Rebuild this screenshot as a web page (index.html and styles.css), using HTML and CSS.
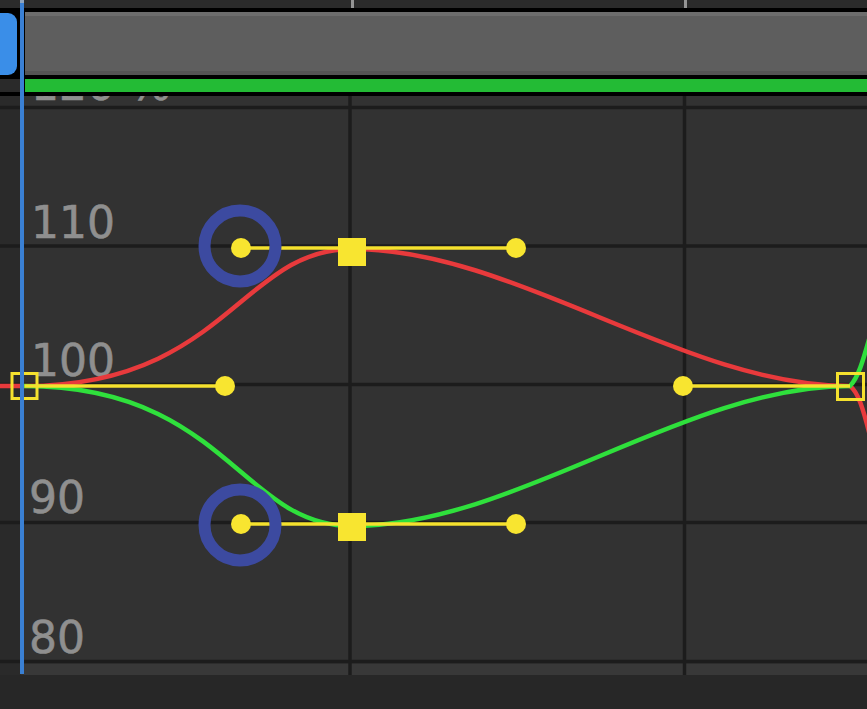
FILE: index.html
```html
<!DOCTYPE html>
<html>
<head>
<meta charset="utf-8">
<link rel="stylesheet" href="styles.css">
</head>
<body>
<div class="screen">
  <div class="ruler">
    <span class="ruler-gap g1"></span><span class="tick"></span>
    <span class="ruler-gap g2"></span><span class="tick"></span>
  </div>
  <div class="header">
    <div class="track">
      <div class="pill"></div>
      <div class="bar"></div>
    </div>
    <div class="keys">
      <div class="keys-left"></div>
      <div class="keys-bar"></div>
    </div>
  </div>
  <div class="graph">
    <svg class="graph-svg" width="867" height="579" viewBox="0 0 867 579">
      <rect x="0" y="0" width="867" height="579" class="bg"/>
      <rect x="0" y="0" width="21" height="579" class="bg-left"/>
      <rect x="24" y="568" width="843" height="11" class="bg-bottom"/>
      <g class="grid">
        <line x1="0" y1="11.5" x2="867" y2="11.5"/>
        <line x1="0" y1="150" x2="867" y2="150"/>
        <line x1="0" y1="288.5" x2="867" y2="288.5"/>
        <line x1="0" y1="426.5" x2="867" y2="426.5"/>
        <line x1="0" y1="565.5" x2="867" y2="565.5"/>
        <line x1="350" y1="0" x2="350" y2="579"/>
        <line x1="684.5" y1="0" x2="684.5" y2="579"/>
      </g>
      <g class="labels">
        <text x="31" y="4">120 %</text>
        <text x="31" y="142">110</text>
        <text x="31" y="280">100</text>
        <text x="29" y="417">90</text>
        <text x="29" y="557">80</text>
      </g>
      <path class="curve red" d="M0,290 L24.5,290 C225,290 241,153 352,153 C516,153 683,290 850,290 C858,296 863,312 870,340"/>
      <path class="curve green" d="M24.5,290 C225,290 241,430 352,430 C516,430 683,290 850,290 C858,282 863,265 870,240"/>
      <g class="handles">
        <line x1="24.5" y1="290" x2="225" y2="290"/>
        <line x1="241" y1="152" x2="516" y2="152"/>
        <line x1="241" y1="428" x2="516" y2="428"/>
        <line x1="683" y1="290" x2="850" y2="290"/>
      </g>
      <g class="dots">
        <circle cx="225" cy="290" r="10"/>
        <circle cx="241" cy="152" r="10"/>
        <circle cx="516" cy="152" r="10"/>
        <circle cx="241" cy="428" r="10"/>
        <circle cx="516" cy="428" r="10"/>
        <circle cx="683" cy="290" r="10"/>
        <rect x="338" y="142" width="28" height="28"/>
        <rect x="338" y="417" width="28" height="28"/>
      </g>
      <g class="hollow">
        <rect x="12" y="277.5" width="25" height="25"/>
        <rect x="837.5" y="277.5" width="26" height="26"/>
      </g>
      <g class="rings">
        <circle cx="240" cy="150" r="35.5"/>
        <circle cx="240" cy="429" r="35.5"/>
      </g>
    </svg>
  </div>
  <div class="footer"></div>
  <div class="playhead"><span class="playhead-cap"></span></div>
</div>
</body>
</html>
```
FILE: styles.css
```css
html, body {
  margin: 0;
  padding: 0;
  background: #272727;
}
.screen {
  position: relative;
  width: 867px;
  height: 709px;
  overflow: hidden;
  font-family: "DejaVu Sans", sans-serif;
}
.ruler {
  display: flex;
  height: 8px;
  background: #2b2b2b;
}
.ruler-gap.g1 { width: 351px; }
.ruler-gap.g2 { width: 330px; }
.tick {
  width: 3px;
  background: #959595;
}
.header {
  display: flex;
  flex-direction: column;
  gap: 4px;
  padding: 4px 0;
  background: #000;
}
.track {
  display: flex;
  height: 63px;
}
.pill {
  width: 17px;
  margin-top: 1px;
  background: #3a8ee8;
  border-radius: 0 9px 9px 0;
}
.bar {
  flex: 1;
  margin-left: 8px;
  background: #5e5e5e;
  border-top: 4px solid #6d6d6d;
  border-bottom: 4px solid #545454;
}
.keys {
  display: flex;
  height: 13px;
}
.keys-left {
  width: 20px;
  background: #2a2a2a;
}
.keys-bar {
  flex: 1;
  margin-left: 5px;
  background: #23bb35;
}
.graph {
  height: 579px;
  overflow: hidden;
}
.graph-svg {
  display: block;
  overflow: hidden;
}
.bg { fill: #323232; }
.bg-left { fill: #2a2a2a; }
.bg-bottom { fill: #383838; }
.grid line {
  stroke: #1c1c1c;
  stroke-width: 3.5;
}
.labels text {
  font-family: "DejaVu Sans", sans-serif;
  font-size: 44px;
  fill: #8f8f8f;
  stroke: #8f8f8f;
  stroke-width: 0.6;
}
.curve {
  fill: none;
  stroke-width: 4.5;
  stroke-linecap: round;
}
.curve.red { stroke: #e83a3c; }
.curve.green { stroke: #2fe03c; }
.handles line {
  stroke: #f5e12e;
  stroke-width: 3.5;
}
.dots circle,
.dots rect {
  fill: #f8e530;
}
.hollow rect {
  fill: none;
  stroke: #f5e12e;
  stroke-width: 3;
}
.rings circle {
  fill: none;
  stroke: #3c4aa0;
  stroke-width: 12;
}
.footer {
  height: 34px;
  background: #272727;
}
.playhead {
  position: absolute;
  left: 20px;
  top: 0;
  width: 4px;
  height: 674px;
  background: #3a80d4;
}
.playhead-cap {
  position: absolute;
  left: 0;
  top: 0;
  width: 4px;
  height: 3px;
  background: #8fa4bd;
}
```
